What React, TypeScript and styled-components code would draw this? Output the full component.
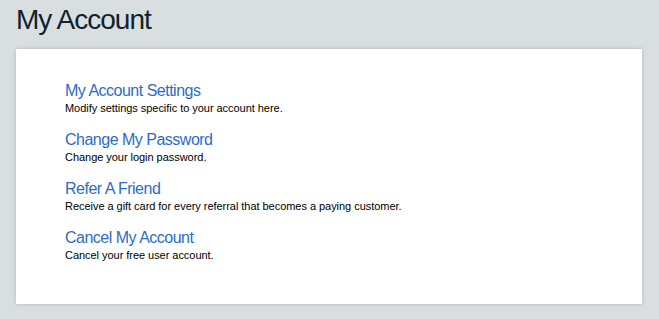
import React from "react";
import styled, { createGlobalStyle } from "styled-components";

const Global = createGlobalStyle`
  html, body { margin: 0; padding: 0; background: #d9dee0; }
  body { font-family: "Liberation Sans", Arial, sans-serif; }
`;

const Page = styled.div`
  padding: 0 17px 0 16px;
  height: 319px;
  box-sizing: border-box;
`;

const Title = styled.h1`
  margin: 0;
  padding-top: 4px;
  height: 45px;
  font-size: 28px;
  font-weight: normal;
  color: #10222e;
  letter-spacing: -1px;
  line-height: 32px;
`;

const Card = styled.div`
  background: #ffffff;
  box-shadow: 0 0 4px rgba(0, 0, 0, 0.18);
  height: 255px;
  box-sizing: border-box;
  padding: 32px 49px 30px;
  display: flex;
  flex-direction: column;
  gap: 15px;
`;

const Item = styled.div`
  display: flex;
  flex-direction: column;
`;

const Link = styled.a`
  font-size: 16px;
  line-height: 20px;
  color: #2b6cca;
  text-decoration: none;
  letter-spacing: -0.5px;
`;

const Desc = styled.div`
  font-size: 11px;
  line-height: 14px;
  color: #000;
  letter-spacing: -0.04px;
`;

const items = [
  ["My Account Settings", "Modify settings specific to your account here."],
  ["Change My Password", "Change your login password."],
  ["Refer A Friend", "Receive a gift card for every referral that becomes a paying customer."],
  ["Cancel My Account", "Cancel your free user account."],
];

export default function App() {
  return (
    <>
      <Global />
      <Page>
        <Title>My Account</Title>
        <Card>
          {items.map(([t, d]) => (
            <Item key={t}>
              <Link href="#">{t}</Link>
              <Desc>{d}</Desc>
            </Item>
          ))}
        </Card>
      </Page>
    </>
  );
}
